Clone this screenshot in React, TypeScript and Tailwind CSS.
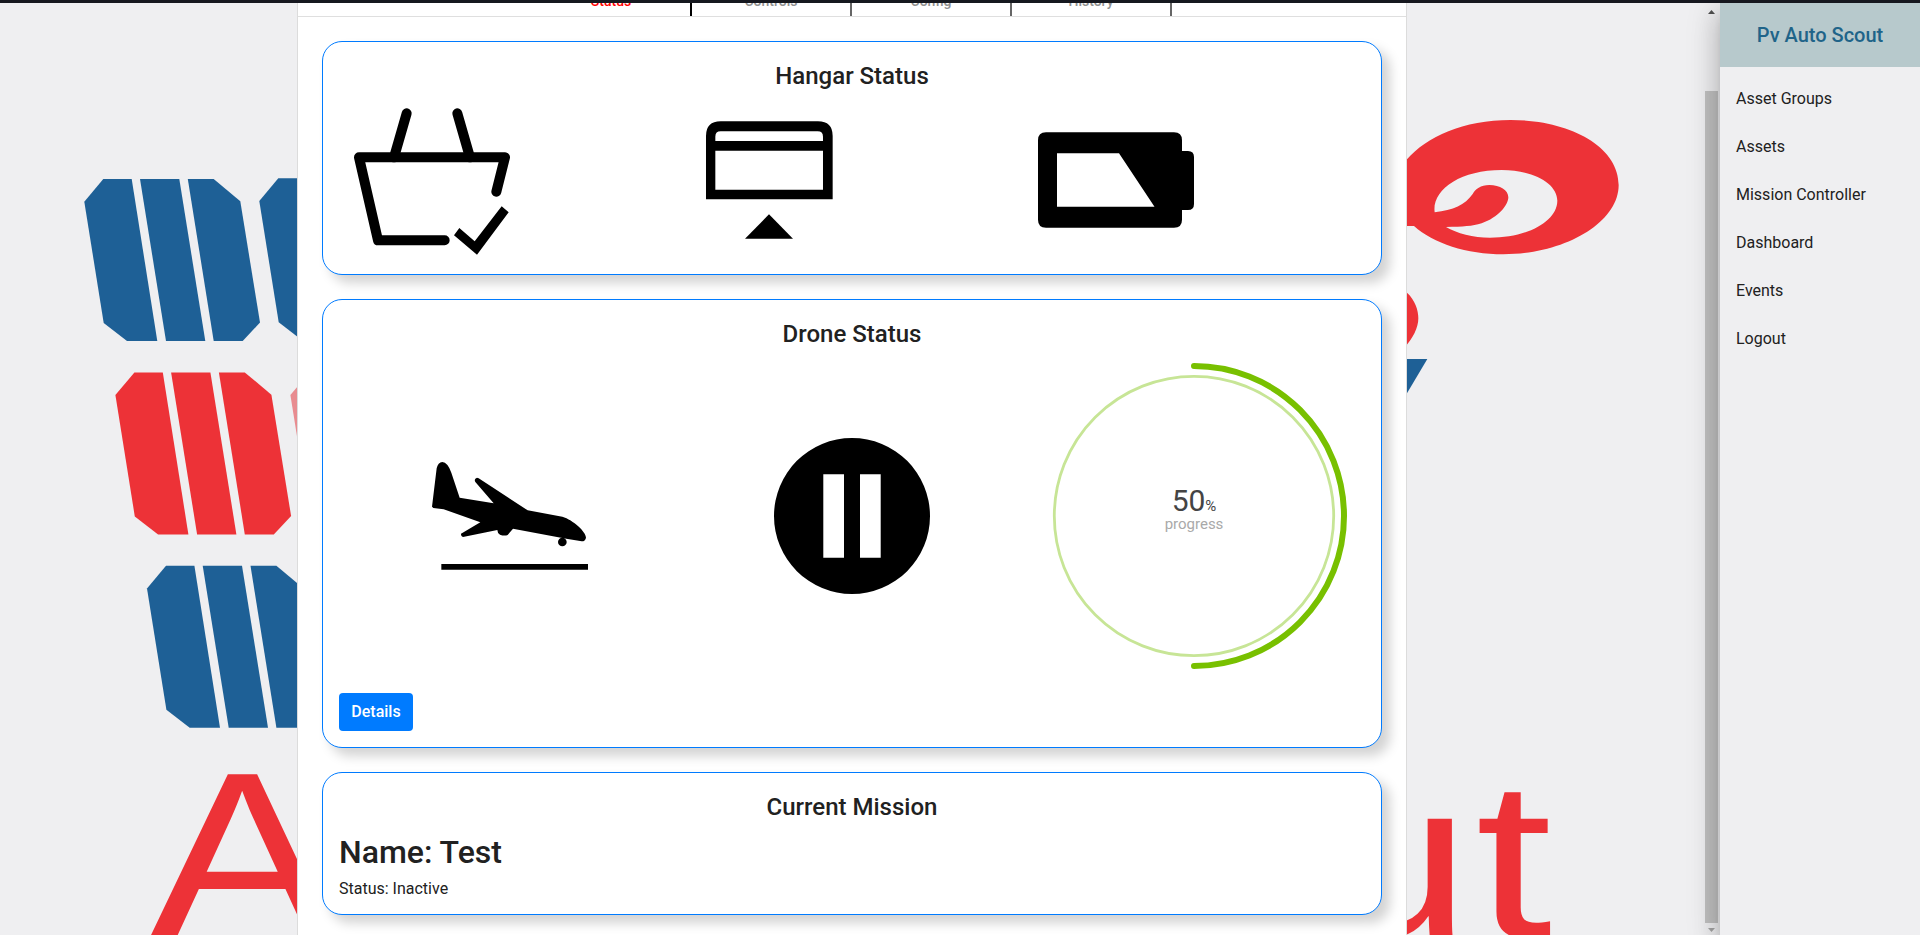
import React from "react";

function Bars({ x, y, fill }: { x: number; y: number; fill: string }) {
  return (
    <g transform={`translate(${x} ${y})`} fill={fill}>
      <path d="M0 22.7 19 0H47.4L73 162H42.7L19.4 144Z" />
      <path d="M55.7 0H95L121 162H81.7Z" />
      <path d="M103.5 0H129.4L156 22.3 175.7 143.6 158.4 162H129.4Z" />
    </g>
  );
}

function Backdrop() {
  return (
    <svg className="absolute inset-0" width="1720" height="935" viewBox="0 0 1720 935" aria-hidden="true">
      <Bars x={84.3} y={179} fill="#1e6096" />
      <Bars x={259.3} y={178.3} fill="#1e6096" />
      <Bars x={115.4} y={372.4} fill="#ed3237" />
      <Bars x={290.4} y={372.4} fill="#e88c90" />
      <Bars x={147} y={565.8} fill="#1e6096" />
      <g transform="translate(1390 90) scale(0.33333)">
        <path
          fill="#ed3237"
          fillRule="evenodd"
          d="M40 220 51 208C110 140 220 90 362 90C540 90 686 170 686 285C686 400 520 493 340 493C230 493 130 460 72 408H40ZM134 367C125 300 210 240 335 240C430 240 502 280 502 332C502 395 410 443 300 443C250 443 200 430 168 411C220 410 246 409 275 400C325 383 355 345 355 322C355 300 330 285 298 285C272 285 256 297 248 312C225 345 190 360 134 367Z"
        />
        <path fill="#ed3237" d="M40 597 51 608C75 630 85 660 85 685C85 712 70 745 40 776Z" />
        <path fill="#1e6096" d="M30 807H112L30 945Z" />
      </g>
      <g fill="#ed3237" fontFamily="'Liberation Sans', Arial, sans-serif">
        <text transform="translate(149.8 936.5) scale(1.17 1)" x="0" y="0" fontSize="236">A</text>
        <text transform="translate(1317.6 936.5) scale(1.237 1)" x="0 127.6" y="0" fontSize="223">ut</text>
      </g>
    </svg>
  );
}

function Basket() {
  return (
    <svg width="156" height="156" viewBox="0 0 156 156">
      <g transform="translate(-9 -2) scale(0.33333)">
        <g fill="none" stroke="#000" strokeWidth="30" strokeLinecap="round" strokeLinejoin="round">
          <path d="M185 40 147 172M337 40 375 172" />
          <path d="M454 275 480 172H42L99 421H299" />
        </g>
        <path d="M343 384 389 424 470 319 491 337 396 464 327 406Z" />
      </g>
    </svg>
  );
}

function Hatch() {
  return (
    <svg width="156" height="156" viewBox="0 0 156 156">
      <g transform="translate(-351 -2) scale(0.33333)">
        <path
          fillRule="evenodd"
          d="M1083 298V108Q1083 64 1127 64H1419Q1463 64 1463 108V298ZM1111 123H1434V110Q1434 94 1418 94H1127Q1111 94 1111 110ZM1111 152V269H1434V152Z"
        />
        <path d="M1272 343 1344 416H1200Z" />
      </g>
    </svg>
  );
}

function Battery() {
  return (
    <svg width="156" height="156" viewBox="0 0 156 156">
      <path
        fillRule="evenodd"
        d="M8 30.3H136Q144 30.3 144 38.3V49H150Q156 49 156 55V102Q156 108 150 108H144V117.7Q144 125.7 136 125.7H8Q0 125.7 0 117.7V38.3Q0 30.3 8 30.3ZM19 51.3V104.7H116.5L81 51.3Z"
      />
    </svg>
  );
}

function Landing() {
  return (
    <svg width="156" height="156" viewBox="0 0 156 156">
      <g transform="translate(-7 -8) scale(0.33333)">
        <path d="M21 230 35 115Q39 97 52 96Q68 97 79 128L104 203 206 220 151 156Q146 146 156 143L161 145 308 241 412 260C445 270 483 305 483 323Q481 334 470 334L424 326 264 296 248 315Q238 319 225 314Q217 309 217 300L114 321Q107 320 108 311L166 277 56 238 25 234Z" />
        <circle cx="412" cy="336" r="13" />
        <path d="M49 402H489V419H49Z" />
      </g>
    </svg>
  );
}

function Pause() {
  return (
    <svg width="156" height="156" viewBox="0 0 156 156">
      <path fillRule="evenodd" d="M78 0A78 78 0 1 1 78 156A78 78 0 1 1 78 0ZM49.3 36.3V119.7H70V36.3ZM86 36.3V119.7H106.7V36.3Z" />
    </svg>
  );
}

function Progress() {
  return (
    <svg width="312" height="312" viewBox="-156 -156 312 312" fontFamily="Roboto, sans-serif">
      <circle r="139.7" fill="none" stroke="#c7e596" strokeWidth="2.8" />
      <path d="M0-150A150 150 0 0 1 0 150" fill="none" stroke="#78c000" strokeWidth="6" strokeLinecap="round" />
      <text x="0" y="-5" textAnchor="middle" fill="#444" fontSize="30">
        50<tspan fontSize="15">%</tspan>
      </text>
      <text x="0" y="12.5" textAnchor="middle" fill="#a9a9a9" fontSize="15">progress</text>
    </svg>
  );
}

function Card({ title, children }: { title: string; children: React.ReactNode }) {
  return (
    <section className="rounded-[20px] border border-[#007bff] bg-white p-4 shadow-[8px_8px_12px_#d3d3d3]">
      <h4 className="text-center text-2xl leading-9 font-medium">{title}</h4>
      {children}
    </section>
  );
}

const tabs = ["Status", "Controls", "Config", "History"];
const links = ["Asset Groups", "Assets", "Mission Controller", "Dashboard", "Events", "Logout"];

export default function App() {
  return (
    <div className="relative flex h-[935px] w-[1920px] flex-col overflow-hidden bg-[#efeff1] font-['Roboto',sans-serif] text-[#212121]">
      <Backdrop />
      <div className="relative z-10 h-[3px] shrink-0 bg-[#16181f]" />
      <div className="relative flex min-h-0 flex-1">
        <main className="flex w-[1703px] flex-col overflow-hidden">
          <div className="ml-[297px] min-h-full w-[1110px] border-x border-[#dcdcdc] bg-white">
            <div className="flex h-[14px] items-end justify-center overflow-hidden border-b border-[#dfdfdf]">
              {tabs.map((tab, i) => (
                <div
                  key={tab}
                  className={
                    i === 0
                      ? "flex h-[30px] w-40 shrink-0 items-center justify-center border-r-2 border-black text-sm font-medium text-[#f00]"
                      : "flex h-[30px] w-40 shrink-0 items-center justify-center border-r-2 border-[#666] text-sm font-medium text-[#909090]"
                  }
                >
                  {tab}
                </div>
              ))}
            </div>
            <div className="flex flex-col gap-6 p-6">
              <Card title="Hangar Status">
                <div className="mt-2 grid grid-cols-3 *:ml-[15px]">
                  <Basket />
                  <Hatch />
                  <Battery />
                </div>
              </Card>
              <Card title="Drone Status">
                <div className="mt-2 mb-[21px] grid grid-cols-3 place-items-center">
                  <Landing />
                  <Pause />
                  <Progress />
                </div>
                <button className="block h-[38px] w-[74px] rounded bg-[#007bff] text-base font-medium text-white">Details</button>
              </Card>
              <Card title="Current Mission">
                <h2 className="text-[32px] leading-[54px] font-medium">Name: Test</h2>
                <p className="text-base leading-[19px]">Status: Inactive</p>
              </Card>
            </div>
          </div>
        </main>
        <div className="flex w-[17px] flex-col items-center pt-[7px] pb-[3px]">
          <svg width="7" height="4" viewBox="0 0 7 4"><path d="M3.5 0 7 4H0Z" fill="#505050" /></svg>
          <div className="mt-[77px] w-[13px] flex-1 bg-[#c1c1c1]" />
          <svg className="mt-[5px]" width="7" height="4" viewBox="0 0 7 4"><path d="M0 0H7L3.5 4Z" fill="#a3a3a3" /></svg>
        </div>
        <aside className="w-[200px] bg-[#efeff1] shadow-[0_8px_10px_-5px_rgba(0,0,0,0.2),0_16px_24px_2px_rgba(0,0,0,0.14),0_6px_30px_5px_rgba(0,0,0,0.12)]">
          <h1 className="flex h-16 items-center justify-center bg-[#b7c9cc] text-xl font-medium text-[#1f6489]">Pv Auto Scout</h1>
          <nav className="flex flex-col pt-2">
            {links.map((link) => (
              <a key={link} className="flex h-12 items-center px-4 text-base">{link}</a>
            ))}
          </nav>
        </aside>
      </div>
    </div>
  );
}
